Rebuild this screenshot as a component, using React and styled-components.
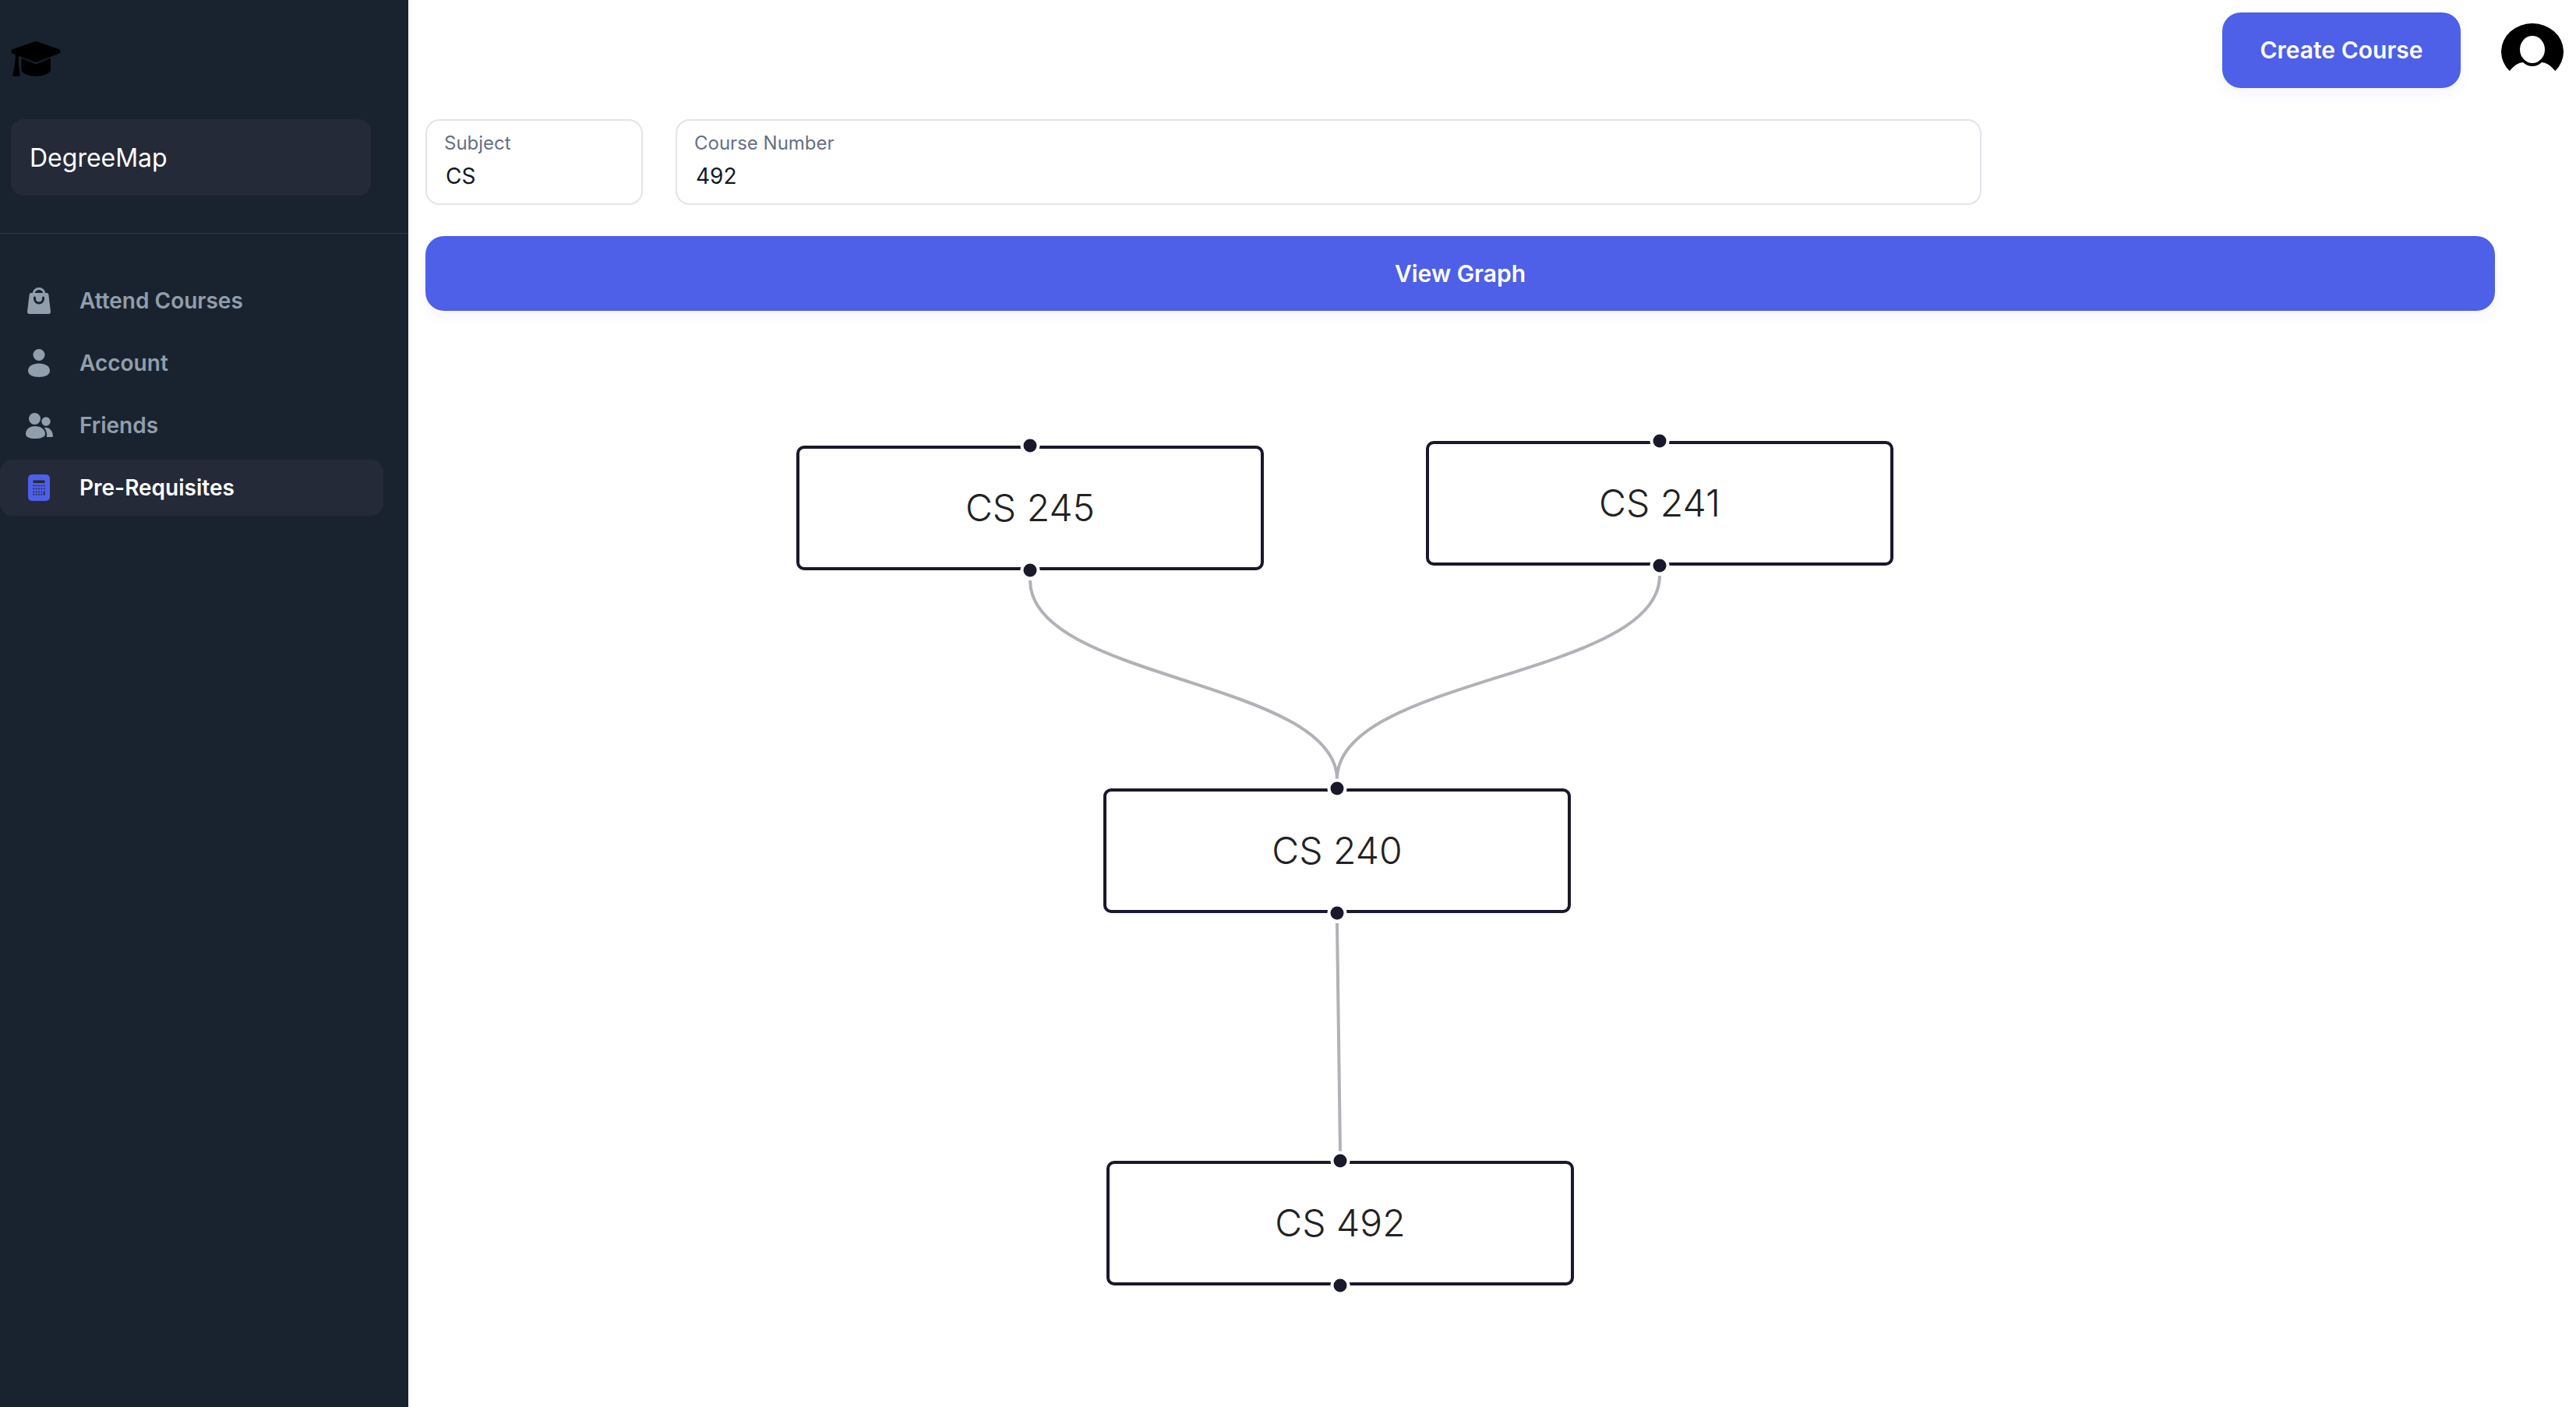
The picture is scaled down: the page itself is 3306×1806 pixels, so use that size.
import React from 'react';
import styled, { createGlobalStyle } from 'styled-components';

const GlobalStyle = createGlobalStyle`
  html, body {
    margin: 0;
    padding: 0;
    background: #fff;
    font-family: Inter, "Noto Sans", sans-serif;
  }
  * {
    box-sizing: border-box;
  }
`;

const Page = styled.div`
  display: flex;
  width: 100%;
  min-height: 100vh;
`;

const Sidebar = styled.aside`
  flex: 0 0 524px;
  background: #19232f;
  display: flex;
  flex-direction: column;
`;
const LogoWrap = styled.div`
  display: flex;
  padding: 53px 14px 0;
  height: 153px;
`;
const BrandBox = styled.div`
  display: flex;
  align-items: center;
  width: 462px;
  height: 98px;
  margin-left: 14px;
  padding-left: 24px;
  border-radius: 16px;
  background: #242a38;
  color: #fff;
  font-size: 32px;
  font-weight: 400;
`;
const Divider = styled.hr`
  width: 100%;
  height: 1px;
  margin: 48px 0 50px;
  border: none;
  background: rgba(145, 158, 171, 0.2);
`;
const Nav = styled.nav`
  display: flex;
  flex-direction: column;
  gap: 8px;
`;
const NavItem = styled.a`
  display: flex;
  align-items: center;
  gap: 28px;
  width: 492px;
  height: 72px;
  padding-left: 26px;
  border-radius: 16px;
  font-size: 28px;
  font-weight: 600;
  color: ${(p) => (p.$active ? '#fff' : '#919eab')};
  background: ${(p) => (p.$active ? '#242a38' : 'transparent')};
`;
const IconSlot = styled.span`
  display: flex;
  align-items: center;
  justify-content: center;
  flex: 0 0 48px;
  height: 48px;
`;

const Main = styled.main`
  flex: 1;
  display: flex;
  flex-direction: column;
`;
const TopBar = styled.header`
  display: flex;
  justify-content: flex-end;
  align-items: flex-start;
  gap: 52px;
  padding: 16px 16px 0 0;
`;
const AvatarIcon = styled.svg`
  width: 80px;
  height: 62px;
  margin-top: 14px;
`;
const PrimaryButton = styled.button`
  border: none;
  border-radius: 24px;
  background: #4e5fe8;
  color: #fff;
  font-family: inherit;
  font-size: 30px;
  font-weight: 600;
  padding: 0;
  box-shadow: 0 8px 16px rgba(78, 95, 232, 0.06);
`;
const CreateButton = styled(PrimaryButton)`
  width: 306px;
  height: 97px;
  padding-bottom: 2px;
`;
const SearchArea = styled.section`
  display: flex;
  flex-direction: column;
  gap: 40px;
  padding: 40px 0 0 22px;
`;
const Fields = styled.div`
  display: flex;
  gap: 42px;
`;
const Field = styled.label`
  display: flex;
  flex-direction: column;
  width: ${(p) => p.$width}px;
  height: 110px;
  padding: 14px 22px 0;
  border: 2px solid #e3e4ea;
  border-radius: 18px;
`;
const FieldLabel = styled.span`
  font-size: 24px;
  line-height: 30px;
  color: #667085;
`;
const FieldInput = styled.input`
  width: 100%;
  margin-top: 9px;
  padding: 0 0 0 2px;
  border: none;
  outline: none;
  background: transparent;
  font-family: inherit;
  font-size: 28px;
  line-height: 36px;
  color: #111827;
`;
const ViewButton = styled(PrimaryButton)`
  width: 2656px;
  height: 96px;
`;

const Canvas = styled.div`
  position: relative;
  flex: 1;
`;
const EdgeLayer = styled.svg`
  position: absolute;
  inset: 0;
  width: 100%;
  height: 100%;
`;
const Node = styled.div`
  position: absolute;
  display: flex;
  align-items: center;
  justify-content: center;
  left: ${(p) => p.$x}px;
  top: ${(p) => p.$y}px;
  width: 600px;
  height: 160px;
  padding-bottom: 2px;
  border: 4px solid #1a192b;
  border-radius: 10px;
  background: #fff;
  color: #222;
  font-size: 48px;
  font-weight: 350;
`;
const Handle = styled.span`
  position: absolute;
  left: 50%;
  width: 25px;
  height: 25px;
  border: 4px solid #fff;
  border-radius: 50%;
  background: #1a192b;
  ${(p) =>
    p.$bottom
      ? 'bottom: -4px; transform: translate(-50%, 50%);'
      : 'top: -4px; transform: translate(-50%, -50%);'}
`;

const CapIcon = () => (
  <svg width="64" height="45" viewBox="0 0 64 45" fill="#000">
    <path d="M30 .6Q32 0 34 .6L62.5 10.5Q65 13 62.5 15.5L34 26.4Q32 27 30 26.4L1.5 15.5Q-1 13 1.5 10.5Z" />
    <path d="M6 17L10 18.5L10 30L11.5 44Q11.5 45 10 45L3.5 45Q2 45 2.2 44L5 30Z" />
    <path d="M13.5 21.5L29.5 28.5Q32 29.5 34.5 28.5L51 21.5L51 38Q45 45 32 45Q19 45 13.5 38Z" />
  </svg>
);

const BagIcon = () => (
  <svg width="30" height="34" viewBox="0 0 30 34" fill="#919eab">
    <path d="M8 9V8.5a7 7 0 0 1 14 0V9" fill="none" stroke="#919eab" strokeWidth="3" />
    <path d="M5 7H25Q27 7 27.3 9L30 31Q30 34 27 34H3Q0 34 0 31L2.7 9Q3 7 5 7Z" />
    <path d="M9.5 13v1.5a5.5 5.5 0 0 0 11 0V13" fill="none" stroke="#19232f" strokeWidth="3" strokeLinecap="round" />
  </svg>
);

const UserIcon = () => (
  <svg width="28" height="36" viewBox="0 0 28 36" fill="#919eab">
    <circle cx="14" cy="7.5" r="7.5" />
    <path d="M0 28C0 22 6 18.5 14 18.5C22 18.5 28 22 28 28C28 33 22 36 14 36C6 36 0 33 0 28Z" />
  </svg>
);

const FriendsIcon = () => (
  <svg width="35" height="33" viewBox="0 0 35 33" fill="#919eab">
    <circle cx="11.5" cy="7.5" r="7.5" />
    <circle cx="26" cy="11" r="5.7" />
    <path d="M0 27C0 21 5 17 12 17C19 17 25 21 25 27C25 31 19 33 12 33C5 33 0 31 0 27Z" />
    <path d="M24 19C30 18 35 23 35 30Q35 31 33 31L27 31Q28 25 24 19Z" />
  </svg>
);

const calcCols = [7.3, 10.7, 14, 17.3, 20.7];
const calcRows = [14.4, 18.4, 22.4, 25.7];

const CalculatorIcon = () => (
  <svg width="28" height="34" viewBox="0 0 28 34">
    <rect width="28" height="34" rx="5" fill="#4e5fe8" />
    <rect x="6.5" y="7.5" width="15" height="3.5" rx="0.6" fill="#242a38" />
    {calcRows.map((y, r) =>
      calcCols.map((x, c) =>
        c === 4 && r > 1 ? null : (
          <rect key={`${r}-${c}`} x={x - 0.85} y={y - 0.85} width="1.7" height="1.7" fill="#242a38" />
        )
      )
    )}
    <rect x="19.8" y="21.5" width="1.8" height="5.1" fill="#242a38" />
  </svg>
);

const navItems = [
  { label: 'Attend Courses', icon: <BagIcon /> },
  { label: 'Account', icon: <UserIcon /> },
  { label: 'Friends', icon: <FriendsIcon /> },
  { label: 'Pre-Requisites', icon: <CalculatorIcon />, active: true },
];

// node positions are relative to the canvas, which starts at 524,398
const nodes = [
  { label: 'CS 245', x: 498, y: 173 },
  { label: 'CS 241', x: 1306, y: 167 },
  { label: 'CS 240', x: 892, y: 613 },
  { label: 'CS 492', x: 896, y: 1091 },
];

const edges = [
  'M798 346C798 474 1192 474 1192 602',
  'M1606 340C1606 470 1192 470 1192 601',
  'M1192 786L1196 1080',
];

const App = () => {
  return (
    <Page>
      <GlobalStyle />
      <Sidebar>
        <LogoWrap>
          <CapIcon />
        </LogoWrap>
        <BrandBox>DegreeMap</BrandBox>
        <Divider />
        <Nav>
          {navItems.map((item) => (
            <NavItem key={item.label} $active={item.active}>
              <IconSlot>{item.icon}</IconSlot>
              {item.label}
            </NavItem>
          ))}
        </Nav>
      </Sidebar>
      <Main>
        <TopBar>
          <CreateButton>Create Course</CreateButton>
          <AvatarIcon viewBox="0 0 80 62">
            <path d="M10.7 61A40 36.3 0 1 1 69.3 61Q60 50 52 50Q47 55 40 55Q33 55 28 50Q20 50 10.7 61Z" fill="#000" />
            <ellipse cx="40" cy="33.5" rx="16" ry="17.5" fill="#fff" />
          </AvatarIcon>
        </TopBar>
        <SearchArea>
          <Fields>
            <Field $width={279}>
              <FieldLabel>Subject</FieldLabel>
              <FieldInput defaultValue="CS" />
            </Field>
            <Field $width={1676}>
              <FieldLabel>Course Number</FieldLabel>
              <FieldInput defaultValue="492" />
            </Field>
          </Fields>
          <ViewButton>View Graph</ViewButton>
        </SearchArea>
        <Canvas>
          <EdgeLayer>
            {edges.map((d) => (
              <path key={d} d={d} fill="none" stroke="#b1b1b7" strokeWidth="4" />
            ))}
          </EdgeLayer>
          {nodes.map((node) => (
            <Node key={node.label} $x={node.x} $y={node.y}>
              <Handle />
              {node.label}
              <Handle $bottom />
            </Node>
          ))}
        </Canvas>
      </Main>
    </Page>
  );
};

export default App;
